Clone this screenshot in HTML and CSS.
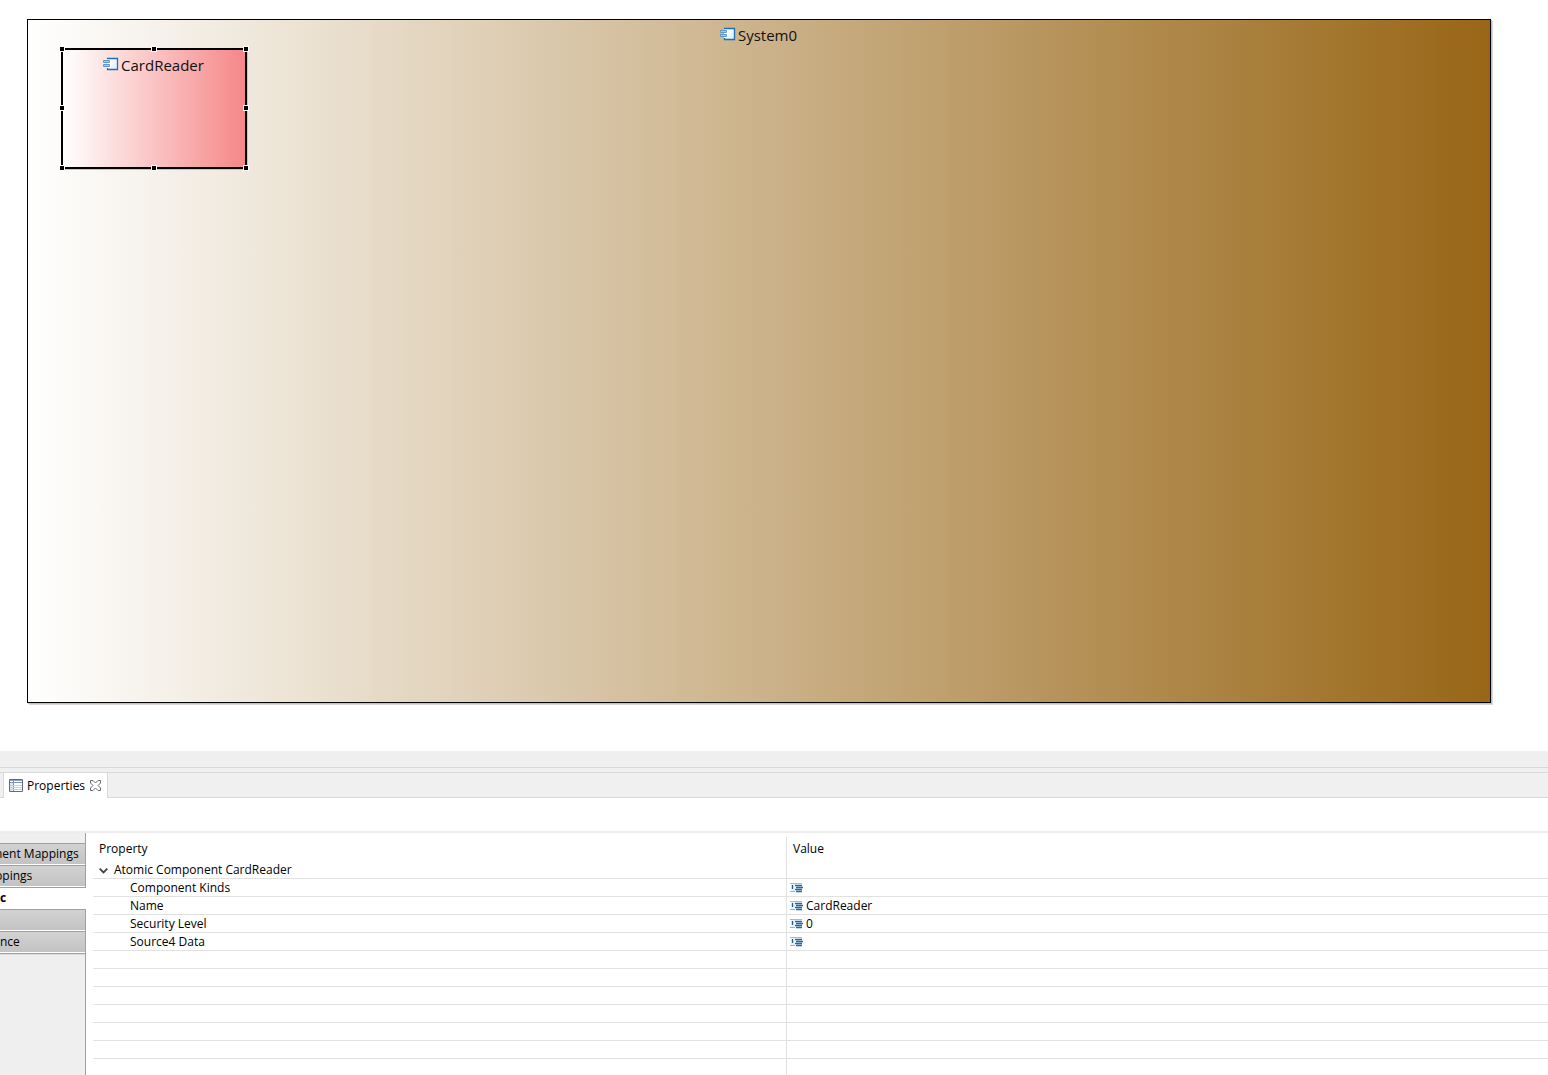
FILE: index.html
```html
<!DOCTYPE html>
<html lang="en">
<head>
<meta charset="utf-8">
<title>System0 - Properties</title>
<link rel="stylesheet" href="styles.css">
</head>
<body>
<svg class="defs" aria-hidden="true">
  <defs>
    <linearGradient id="paper" x1="0" y1="0" x2="1" y2="1"><stop offset="0" stop-color="#fff"/><stop offset="1" stop-color="#dcecfb"/></linearGradient>
    <linearGradient id="frame" x1="0" y1="0" x2="0" y2="1"><stop offset="0" stop-color="#c2bf93"/><stop offset="1" stop-color="#86aeca"/></linearGradient>
  </defs>
  <symbol id="component" viewBox="0 0 16 14">
    <path d="M4.500 2V1.500H14.500V12.500H4.500V11" fill="url(#paper)" stroke="#1f70b2" stroke-width="1.300"/>
    <path d="M4 3h4v8H4z" fill="#fff"/>
    <rect x="0" y="3" width="7" height="3" rx="1" fill="#5f97c8"/>
    <path d="M1 4.500H6" stroke="#a5cbe8"/>
    <rect x="0" y="7" width="7" height="3" rx="1" fill="#5f97c8"/>
    <path d="M1 8.500H6" stroke="#a5cbe8"/>
  </symbol>
  <symbol id="field" viewBox="0 0 13 10">
    <path d="M.5 0V9" stroke="url(#frame)"/>
    <path d="M1 1H5V8H1z" fill="#e8f3fb"/>
    <path d="M0 .5H12" stroke="#bcbb8f"/>
    <path d="M0 8.500H5" stroke="#8db5d2"/>
    <path d="M2.500 2V6" stroke="#1f5c8d" stroke-width="1.300"/>
    <path d="M5 2.500H12M6 4.500H13M5 6.500H12M6 8.500H12" stroke="#2468a0" stroke-width="1.300"/>
  </symbol>
</svg>
<main class="canvas">
  <section class="system">
    <h1 class="label"><svg class="component-icon"><use href="#component"/></svg>System0</h1>
    <article class="card">
      <h2 class="label"><svg class="component-icon"><use href="#component"/></svg>CardReader</h2>
      <i class="handle top left"></i><i class="handle top center"></i><i class="handle top right"></i>
      <i class="handle middle left"></i><i class="handle middle right"></i>
      <i class="handle bottom left"></i><i class="handle bottom center"></i><i class="handle bottom right"></i>
    </article>
  </section>
</main>
<section class="panel">
  <div class="sash"></div>
  <header class="tabbar">
    <div class="tab">
      <svg class="tab-icon" viewBox="0 0 14 13"><path d="M.5 .5H13.500V12.500H.5z" fill="#fff" stroke="#5a6b92"/><path d="M1 1.500H13" stroke="#8fa0bf"/><path d="M1 3.500H13" stroke="#8193b5"/><path d="M1 4H4V12H1z" fill="#dde8f7"/><path d="M4.500 2V12" stroke="#8193b5"/><path d="M1 6.500H13M1 8.500H13M1 10.500H13" stroke="#c9cfd8"/></svg>
      <span>Properties</span>
      <button class="close" type="button" aria-label="Close"><svg viewBox="0 0 11 11"><path d="M.5 .5H3L5.500 3L8 .5H10.500V3L8 5.500L10.500 8V10.500H8L5.500 8L3 10.500H.5V8L3 5.500L.5 3z" fill="#fff" stroke="#686868"/></svg></button>
    </div>
  </header>
  <div class="title-area"></div>
  <div class="content">
    <nav class="side">
      <button class="side-tab" type="button"><span class="cut">nent Mappings</span></button>
      <button class="side-tab" type="button"><span class="cut">ppings</span></button>
      <button class="side-tab selected" type="button"><span>c</span></button>
      <button class="side-tab" type="button"></button>
      <button class="side-tab last" type="button"><span>nce</span></button>
    </nav>
    <table class="properties">
      <colgroup><col class="property-col"><col></colgroup>
      <thead><tr><th>Property</th><th>Value</th></tr></thead>
      <tbody>
        <tr><td class="group"><svg class="chevron" viewBox="0 0 9 6"><path d="M.7 .7L4.500 4.500L8.300 .7" fill="none" stroke="#444" stroke-width="1.800"/></svg>Atomic Component CardReader</td><td></td></tr>
        <tr><td class="name">Component Kinds</td><td><svg class="field-icon"><use href="#field"/></svg></td></tr>
        <tr><td class="name">Name</td><td><svg class="field-icon"><use href="#field"/></svg>CardReader</td></tr>
        <tr><td class="name">Security Level</td><td><svg class="field-icon"><use href="#field"/></svg>0</td></tr>
        <tr><td class="name">Source4 Data</td><td><svg class="field-icon"><use href="#field"/></svg></td></tr>
        <tr><td></td><td></td></tr>
        <tr><td></td><td></td></tr>
        <tr><td></td><td></td></tr>
        <tr><td></td><td></td></tr>
        <tr><td></td><td></td></tr>
        <tr><td></td><td></td></tr>
        <tr><td></td><td></td></tr>
      </tbody>
    </table>
  </div>
</section>
</body>
</html>
```
FILE: styles.css
```css
* { box-sizing: border-box; }

body {
  margin: 0;
  min-height: 100vh;
  display: flex;
  flex-direction: column;
  background: #fff;
  color: #000;
  font: 12px/16px "Open Sans", "Noto Sans", sans-serif;
}

button {
  margin: 0;
  padding: 0;
  border: 0;
  background: none;
  color: inherit;
  font: inherit;
}

.defs { position: absolute; width: 0; height: 0; }

/* Diagram */
.canvas {
  flex: 1;
  display: flex;
  padding: 19px 57px 48px 27px;
}

.system {
  position: relative;
  flex: 1;
  padding-top: 4px;
  border: 1px solid #000;
  background: linear-gradient(to right, #fff, #986616);
  box-shadow: 1px 1px 0 #c4bfc4, 2px 2px 0 #dcd5dc;
}

.label {
  display: flex;
  justify-content: center;
  margin: 0;
  padding-right: 1px;
  font-size: 15px;
  line-height: 22px;
  font-weight: 400;
  color: #111;
}

.component-icon {
  width: 16px;
  height: 14px;
  margin: 3px 2px 0 0;
}

.card {
  position: absolute;
  left: 33px;
  top: 28px;
  width: 186px;
  height: 121px;
  padding-top: 4px;
  border: 2px solid #000;
  background: linear-gradient(to right, #fff, #f68787);
  box-shadow: 1px 1px 0 #c9c4c4;
}

.handle {
  position: absolute;
  width: 6px;
  height: 6px;
  border: 1px solid #fff;
  background: #000;
}

.top { top: -4px; }
.middle { top: 55px; }
.bottom { bottom: -4px; }
.left { left: -4px; }
.center { left: 88px; }
.right { right: -4px; }

/* Properties view */
.sash {
  height: 17px;
  border-bottom: 1px solid #d9d9d9;
  background: #efefef;
}

.tabbar {
  height: 30px;
  padding: 4px 0 0 3px;
  background: linear-gradient(#d9d9d9, #d9d9d9) 0 4px / 100% 1px no-repeat, linear-gradient(#d9d9d9, #d9d9d9) 0 100% / 100% 1px no-repeat, #f0f0f0;
}

.tab {
  display: flex;
  align-items: center;
  width: 105px;
  height: 26px;
  padding-left: 5px;
  border: 1px solid #d9d9d9;
  border-bottom: 0;
  background: #fff;
}

.tab-icon { width: 14px; height: 13px; margin-right: 4px; }
.close { width: 11px; height: 11px; margin-left: 5px; }
.close svg { display: block; width: 11px; height: 11px; }

.title-area {
  height: 35px;
  border-bottom: 2px solid #ececec;
}

.content { display: flex; }

.side {
  width: 86px;
  padding: 10px 1px 0 0;
  overflow: hidden;
  background: linear-gradient(#a0a0a0, #a0a0a0) 100% 0 / 1px 100% no-repeat, #efefef;
}

.side-tab {
  display: block;
  width: 100%;
  height: 22px;
  border-top: 1px solid #a0a0a0;
  border-bottom: 1px solid #fff;
  background: linear-gradient(#d2d2d2, #c3c3c3);
  text-align: left;
  white-space: nowrap;
}

.side-tab span { display: block; line-height: 20px; }
.side-tab .cut { margin-left: -5px; }

.side-tab.selected {
  width: 86px;
  background: #fff;
  font-weight: 700;
}

.side-tab.last { box-shadow: 0 1px 0 #a0a0a0, 0 2px 0 #dcdcdc; }

.properties {
  flex: 1;
  margin: 4px 0 0 7px;
  table-layout: fixed;
  border-collapse: separate;
  border-spacing: 0;
}

.property-col { width: 694px; }

.properties th {
  height: 24px;
  padding: 0 6px;
  text-align: left;
  font-weight: 400;
}

.properties td {
  height: 18px;
  padding: 0 3px;
  border-bottom: 1px solid #e1e1e1;
  line-height: 17px;
}

.properties th:first-child,
.properties td:first-child { border-right: 1px solid #e1e1e1; }

.properties tr:last-child td { height: 16px; border-bottom: 0; }

.properties .group { padding-left: 6px; }
.properties .name { padding-left: 37px; }

.chevron { width: 9px; height: 6px; margin-right: 6px; }

.field-icon {
  width: 13px;
  height: 10px;
  margin-right: 3px;
  vertical-align: -1px;
}
```
